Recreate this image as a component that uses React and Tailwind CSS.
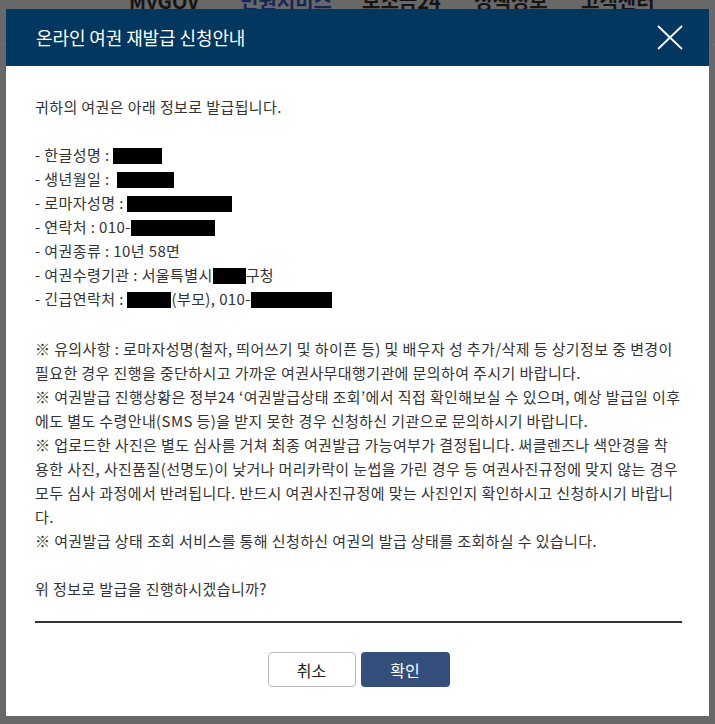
import React from "react";

const font = { fontFamily: '"Noto Sans CJK KR", "Noto Sans", sans-serif' };

function Masked({ w }) {
  return <span className={`inline-block h-[16px] bg-black align-[-3px] ${w}`} />;
}

const notices = [
  "※ 유의사항 : 로마자성명(철자, 띄어쓰기 및 하이픈 등) 및 배우자 성 추가/삭제 등 상기정보 중 변경이",
  "필요한 경우 진행을 중단하시고 가까운 여권사무대행기관에 문의하여 주시기 바랍니다.",
  "※ 여권발급 진행상황은 정부24 ‘여권발급상태 조회’에서 직접 확인해보실 수 있으며, 예상 발급일 이후",
  "에도 별도 수령안내(SMS 등)을 받지 못한 경우 신청하신 기관으로 문의하시기 바랍니다.",
  "※ 업로드한 사진은 별도 심사를 거쳐 최종 여권발급 가능여부가 결정됩니다. 써클렌즈나 색안경을 착",
  "용한 사진, 사진품질(선명도)이 낮거나 머리카락이 눈썹을 가린 경우 등 여권사진규정에 맞지 않는 경우",
  "모두 심사 과정에서 반려됩니다. 반드시 여권사진규정에 맞는 사진인지 확인하시고 신청하시기 바랍니",
  "다.",
  "※ 여권발급 상태 조회 서비스를 통해 신청하신 여권의 발급 상태를 조회하실 수 있습니다.",
];

export default function App() {
  return (
    <div className="relative h-[724px] w-full overflow-hidden bg-[#686868]" style={font}>
      {/* page behind the dimmed overlay */}
      <div className="absolute left-0 top-[-9px] flex pl-[129px] text-[20px] font-bold leading-[20px] text-[#141414]">
        <span className="w-[111px]">MyGOV</span>
        <span className="w-[122px] text-[#14265a] underline">민원서비스</span>
        <span className="w-[112px]">보조금24</span>
        <span className="w-[107px]">정책정보</span>
        <span>고객센터</span>
      </div>
      <div className="absolute left-0 right-0 top-[44px] h-px bg-[#727272]" />

      {/* dialog */}
      <div className="absolute left-[6px] top-[9px] w-[703px] bg-white">
        <div className="flex h-[57px] items-center justify-between bg-[#02375f] pl-[30px] pr-[26px]">
          <h1 className="text-[18px] font-normal tracking-[-0.1px] text-white">
            온라인 여권 재발급 신청안내
          </h1>
          <button className="flex h-[26px] w-[26px] items-center justify-center">
            <svg width="26" height="25" viewBox="0 0 26 25" fill="none" stroke="white" strokeWidth="1.8">
              <line x1="1" y1="1" x2="25" y2="24" />
              <line x1="25" y1="1" x2="1" y2="24" />
            </svg>
          </button>
        </div>

        <div className="pb-[29px] pl-[29px] pr-[27px] pt-[29px]">
          <div className="whitespace-nowrap text-[15px] leading-6 tracking-[0.4px] text-[#333]">
            <div>귀하의 여권은 아래 정보로 발급됩니다.</div>
            <div className="h-6" />
            <div>- 한글성명 : <Masked w="w-[49px]" /></div>
            <div>- 생년월일 : <Masked w="ml-[4px] w-[57px]" /></div>
            <div>- 로마자성명 : <Masked w="w-[105px]" /></div>
            <div>- 연락처 : 010-<Masked w="w-[84px]" /></div>
            <div>- 여권종류 : 10년 58면</div>
            <div>- 여권수령기관 : 서울특별시<Masked w="w-[33px]" />구청</div>
            <div>- 긴급연락처 : <Masked w="w-[44px]" />(부모), 010-<Masked w="w-[81px]" /></div>

            <div className="mt-[26px]">
              {notices.map((line, i) => (
                <div key={i}>{line}</div>
              ))}
              <div className="h-6" />
              <div>위 정보로 발급을 진행하시겠습니까?</div>
            </div>
          </div>

          <div className="mt-[20px] h-[2px] bg-[#333]" />

          <div className="mt-[29px] flex justify-center gap-[5px]">
            <button className="h-[35px] w-[88px] rounded-[4px] border border-[#bbb] bg-white text-[16px] text-[#222]">
              취소
            </button>
            <button className="h-[35px] w-[89px] rounded-[4px] bg-[#344f7b] text-[16px] text-white">
              확인
            </button>
          </div>
        </div>
      </div>
    </div>
  );
}
